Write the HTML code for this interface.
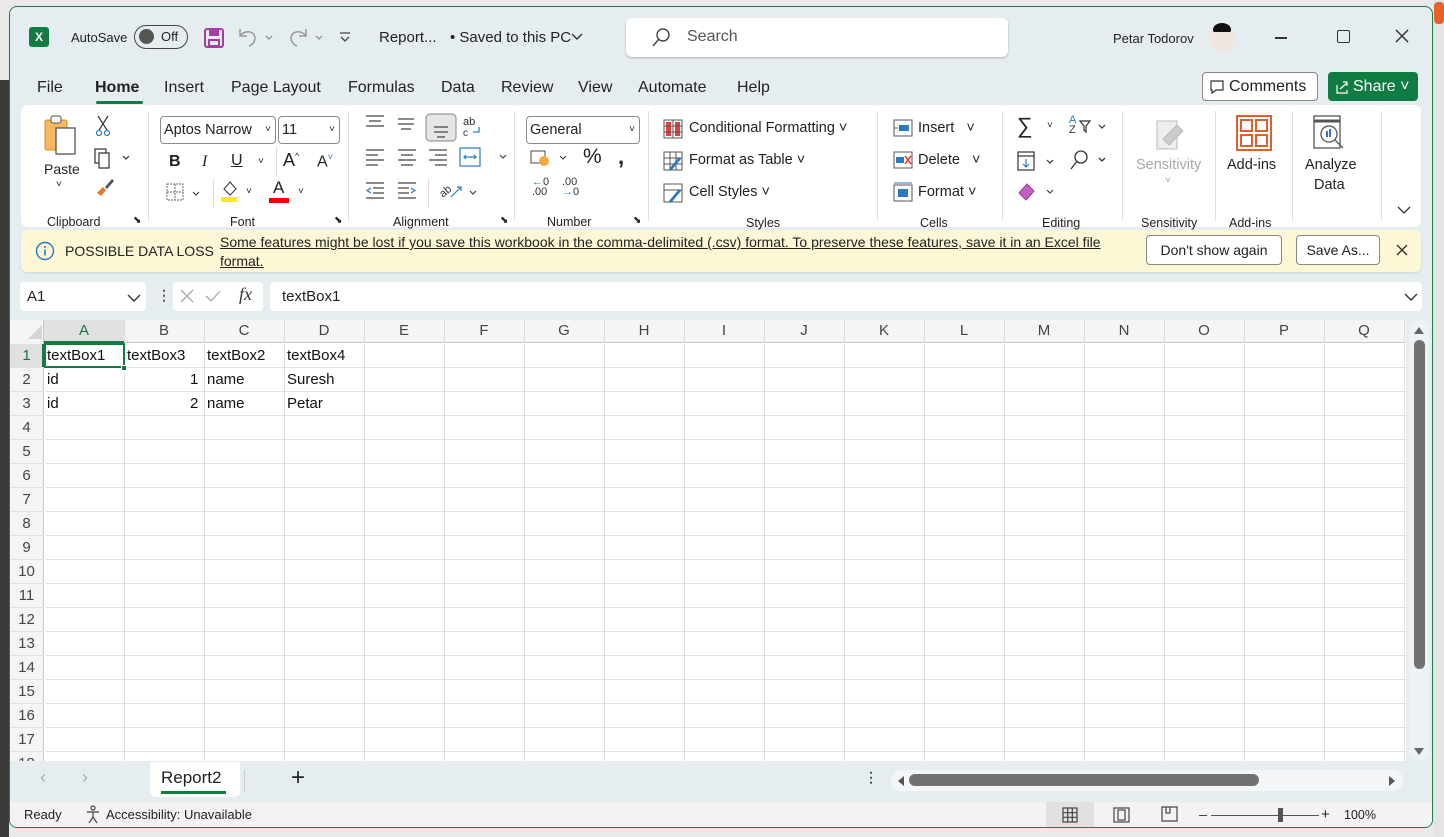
<!DOCTYPE html>
<html><head><meta charset="utf-8"><style>
*{box-sizing:border-box;margin:0;padding:0}
body{width:1444px;height:837px;overflow:hidden;background:#e9e9e9;font-family:"Liberation Sans",sans-serif;font-size:14px;color:#222;position:relative}
.a{position:absolute}
.win{position:absolute;left:9px;top:6px;width:1424px;height:822px;background:#e6edf0;border:1px solid #1f7a45;border-radius:8px;overflow:hidden}
.t{position:absolute;white-space:nowrap}
.ribbon{position:absolute;left:11px;top:98px;width:1400px;height:122px;background:#fff;border-radius:7px}
.rin{position:absolute;left:-10px;top:0;width:1410px;height:122px}
.sep{position:absolute;top:6px;width:1px;height:110px;background:#e0e0e0}
.dd{position:absolute;border:1px solid #8a8a8a;border-radius:4px;background:#fff;height:28px}
.btn{position:absolute;border:1px solid #888;border-radius:4px;background:#fff;height:30px;font-size:14px;text-align:center;line-height:28px}
.ch{position:absolute;top:0;height:22px;text-align:center;line-height:22px;font-size:15px;color:#444}
.rh{position:absolute;left:0;width:33px;height:24px;text-align:center;line-height:24px;font-size:15px;color:#444}
.cell{position:absolute;height:24px;line-height:24px;font-size:15px;color:#111}
</style></head><body>
<div class="a" style="left:0;top:80px;width:9px;height:757px;background:#3b3b3b"></div>
<div class="a" style="left:1433px;top:0;width:11px;height:837px;background:#e4e4e4"></div>
<div class="a" style="left:1434px;top:2px;width:10px;height:22px;background:#e8612c;border-radius:4px"></div>
<div class="win">
 <div class="a" style="left:19px;top:20px;width:20px;height:20px;background:#107c41;border-radius:3px;color:#fff;font-weight:bold;font-size:12px;text-align:center;line-height:20px">X</div>
 <div class="t" style="left:61px;top:23px;font-size:13px">AutoSave</div>
 <div class="a" style="left:124px;top:18px;width:54px;height:24px;border:1.5px solid #444;border-radius:12px"><div class="a" style="left:4px;top:3px;width:15px;height:15px;border-radius:50%;background:#555"></div><span class="t" style="left:26px;top:3px;font-size:13px">Off</span></div>
 <svg class="a" style="left:193px;top:20px" width="22" height="22"><rect x="2" y="2" width="18" height="18" rx="2" fill="none" stroke="#a33ea3" stroke-width="2"/><rect x="6" y="3" width="10" height="6" fill="#a33ea3"/><rect x="6" y="13" width="10" height="6" fill="none" stroke="#a33ea3" stroke-width="2"/></svg>
 <svg class="a" style="left:226px;top:18px" width="40" height="24" fill="none" stroke="#999" stroke-width="1.5"><path d="M4 4v7h7M4 11c4-6 14-6 15 2 0 4-3 7-6 8"/><path d="M30 11l3 3 3-3"/></svg>
 <svg class="a" style="left:276px;top:18px" width="40" height="24" fill="none" stroke="#999" stroke-width="1.5"><path d="M20 4v7h-7M20 11c-4-6-14-6-15 2 0 4 3 7 6 8"/><path d="M30 11l3 3 3-3"/></svg>
 <svg class="a" style="left:328px;top:24px" width="14" height="14" fill="none" stroke="#444" stroke-width="1.3"><path d="M2 2h10M3 6l4 4 4-4"/></svg>
 <div class="t" style="left:369px;top:22px;font-size:15px">Report...</div>
 <div class="t" style="left:440px;top:22px;font-size:15px">• Saved to this PC</div>
 <svg class="a" style="left:560px;top:25px" width="14" height="10" fill="none" stroke="#333" stroke-width="1.4"><path d="M2 2l5 5 5-5"/></svg>
 <div class="a" style="left:616px;top:11px;width:382px;height:39px;background:#fff;border-radius:6px;box-shadow:0 1px 2px rgba(0,0,0,.25)"></div>
 <svg class="a" style="left:640px;top:20px" width="22" height="22" fill="none" stroke="#444" stroke-width="1.4"><circle cx="13" cy="8" r="6"/><path d="M9 12L3 19"/></svg>
 <div class="t" style="left:677px;top:21px;font-size:16px;color:#555">Search</div>
 <div class="t" style="left:1103px;top:24px;font-size:13px">Petar Todorov</div>
 <div class="a" style="left:1199px;top:16px;width:26px;height:30px;border-radius:50%;background:#f0e6e0;overflow:hidden"><div class="a" style="left:4px;top:0;width:18px;height:9px;background:#111;border-radius:8px 8px 2px 2px"></div></div>
 <div class="a" style="left:1265px;top:30px;width:12px;height:1.5px;background:#333"></div>
 <div class="a" style="left:1327px;top:23px;width:13px;height:13px;border:1.5px solid #333;border-radius:2px"></div>
 <svg class="a" style="left:1385px;top:22px" width="14" height="14" stroke="#333" stroke-width="1.5"><path d="M1 1l12 12M13 1L1 13"/></svg>
 <div class="t" style="left:27px;top:72px;font-size:16px">File</div>
 <div class="t" style="left:85px;top:72px;font-size:16px;font-weight:bold;color:#222">Home</div>
 <div class="a" style="left:86px;top:94px;width:47px;height:3px;background:#107c41;border-radius:2px"></div>
 <div class="t" style="left:154px;top:72px;font-size:16px">Insert</div>
 <div class="t" style="left:221px;top:72px;font-size:16px">Page Layout</div>
 <div class="t" style="left:338px;top:72px;font-size:16px">Formulas</div>
 <div class="t" style="left:431px;top:72px;font-size:16px">Data</div>
 <div class="t" style="left:491px;top:72px;font-size:16px">Review</div>
 <div class="t" style="left:568px;top:72px;font-size:16px">View</div>
 <div class="t" style="left:628px;top:72px;font-size:16px">Automate</div>
 <div class="t" style="left:727px;top:72px;font-size:16px">Help</div>
 <div class="a" style="left:1192px;top:65px;width:116px;height:29px;background:#fff;border:1px solid #888;border-radius:4px;font-size:16px;line-height:27px;padding-left:26px">Comments</div>
 <svg class="a" style="left:1199px;top:72px" width="16" height="16" fill="none" stroke="#333" stroke-width="1.2"><path d="M2 2h12v9H7l-4 3v-3H2z"/></svg>
 <div class="a" style="left:1318px;top:65px;width:90px;height:29px;background:#107c41;border-radius:4px;color:#fff;font-size:16px;line-height:29px;padding-left:25px">Share ˅</div>
 <svg class="a" style="left:1324px;top:72px" width="16" height="16" fill="none" stroke="#fff" stroke-width="1.2"><path d="M3 6v8h10v-3M6 10l7-6M9 3h4v4"/></svg>
 <div class="ribbon"><div class="rin">
  <svg class="a" style="left:33px;top:9px" width="34" height="42"><rect x="1" y="6" width="22" height="30" rx="2" fill="#f4b860" stroke="#d88d20"/><rect x="7" y="2" width="10" height="7" rx="2" fill="#fff" stroke="#555"/><rect x="12" y="14" width="19" height="26" fill="#fff" stroke="#555" stroke-width="1.3"/></svg>
  <div class="t" style="left:33px;top:56px;font-size:14px">Paste</div>
  <div class="t" style="left:45px;top:74px;font-size:10px">˅</div>
  <svg class="a" style="left:84px;top:10px" width="16" height="22" fill="none" stroke="#333" stroke-width="1.2"><path d="M3 1l9 14M13 1L4 15"/><circle cx="4" cy="18" r="2.5" stroke="#2b79c2"/><circle cx="12" cy="18" r="2.5" stroke="#2b79c2"/></svg>
  <svg class="a" style="left:82px;top:42px" width="40" height="22" fill="none" stroke="#333" stroke-width="1.2"><rect x="2" y="2" width="11" height="14"/><path d="M6 6h10v15H6z" fill="#fff"/><path d="M30 9l3 3 3-3"/></svg>
  <svg class="a" style="left:84px;top:72px" width="20" height="20"><path d="M2 16l6-6 3 3-5 6z" fill="#e8762b"/><path d="M10 10l7-8 2 2-7 8z" fill="#555"/></svg>
  <div class="t" style="left:36px;top:110px;font-size:12.5px">Clipboard</div>
  <div class="t" style="left:122px;top:110px;font-size:10px">⬊</div>
  <div class="sep" style="left:137px"></div>
  <div class="dd" style="left:149px;top:11px;width:116px;font-size:14.5px;line-height:26px;padding-left:3px">Aptos Narrow<span style="position:absolute;right:4px;font-size:10px">˅</span></div>
  <div class="dd" style="left:267px;top:11px;width:62px;font-size:14.5px;line-height:26px;padding-left:3px">11<span style="position:absolute;right:4px;font-size:10px">˅</span></div>
  <div class="t" style="left:158px;top:48px;font-size:16px;font-weight:bold">B</div>
  <div class="t" style="left:191px;top:48px;font-size:16px;font-style:italic;font-family:'Liberation Serif',serif">I</div>
  <div class="t" style="left:220px;top:47px;font-size:16px;text-decoration:underline">U</div>
  <div class="t" style="left:247px;top:51px;font-size:10px">˅</div>
  <div class="a" style="left:265px;top:42px;width:1px;height:28px;background:#ddd"></div>
  <div class="t" style="left:272px;top:45px;font-size:18px">A<sup style="font-size:9px">^</sup></div>
  <div class="t" style="left:306px;top:47px;font-size:16px">A<sup style="font-size:9px;color:#2b79c2">˅</sup></div>
  <svg class="a" style="left:155px;top:78px" width="38" height="20" fill="none" stroke="#666" stroke-width="1" stroke-dasharray="2 1"><rect x="1" y="1" width="16" height="16"/><path d="M9 1v16M1 9h16"/><path d="M27 9l3 3 3-3" stroke="#333" stroke-dasharray="0"/></svg>
  <div class="a" style="left:202px;top:74px;width:1px;height:28px;background:#ddd"></div>
  <svg class="a" style="left:208px;top:74px" width="20" height="24"><path d="M5 10l6-7 6 7-6 6z" fill="none" stroke="#333"/><rect x="2" y="18" width="16" height="5" fill="#ffee00"/></svg>
  <div class="t" style="left:235px;top:81px;font-size:10px">˅</div>
  <div class="t" style="left:262px;top:73px;font-size:17px">A</div>
  <div class="a" style="left:258px;top:93px;width:20px;height:5px;background:#e00"></div>
  <div class="t" style="left:287px;top:81px;font-size:10px">˅</div>
  <div class="t" style="left:219px;top:110px;font-size:12.5px">Font</div>
  <div class="t" style="left:323px;top:110px;font-size:10px">⬊</div>
  <div class="sep" style="left:337px"></div>
  <svg class="a" style="left:352px;top:8px" width="150" height="100" fill="none" stroke="#444" stroke-width="1.2">
   <path d="M3 3h18M6 8h12M3 13h18"/><path d="M35 6h16M35 11h16M38 16h10"/>
   <rect x="63" y="1" width="30" height="27" rx="4" fill="#e5e5e5" stroke="#999"/><path d="M71 14h14M71 19h14M74 24h8"/>
   <text x="100" y="12" font-size="11" fill="#333" stroke="none" font-family="Liberation Sans">ab</text><text x="100" y="23" font-size="10" fill="#333" stroke="none">c</text><path d="M116 14v5h-6" stroke="#2b79c2"/>
   <path d="M3 37h18M3 42h12M3 47h18M3 52h12"/><path d="M35 37h18M38 42h12M35 47h18M38 52h12"/><path d="M66 37h18M72 42h12M66 47h18M72 52h12"/>
   <rect x="97" y="35" width="20" height="18" stroke="#2b79c2"/><path d="M101 44h12M103 42l-2 2 2 2M111 42l2 2-2 2" stroke="#2b79c2"/><path d="M137 42l3 3 3-3"/>
   <path d="M3 70h18M10 75h11M10 80h11M3 85h18"/><path d="M8 75l-4 2.5 4 2.5" stroke="#2b79c2"/>
   <path d="M35 70h18M35 75h11M35 80h11M35 85h18"/><path d="M48 75l4 2.5-4 2.5" stroke="#2b79c2"/>
   <text x="76" y="82" font-size="11" fill="#333" stroke="none" transform="rotate(-40 82 78)">ab</text><path d="M88 84l10-10M94 74h4v4" stroke="#2b79c2"/><path d="M107 78l3 3 3-3"/>
  </svg>
  <div class="a" style="left:417px;top:74px;width:1px;height:28px;background:#ddd"></div>
  <div class="t" style="left:382px;top:110px;font-size:12.5px">Alignment</div>
  <div class="t" style="left:489px;top:110px;font-size:10px">⬊</div>
  <div class="sep" style="left:503px"></div>
  <div class="dd" style="left:515px;top:11px;width:114px;font-size:14.5px;line-height:26px;padding-left:3px">General<span style="position:absolute;right:4px;font-size:10px">˅</span></div>
  <svg class="a" style="left:518px;top:42px" width="40" height="22"><rect x="2" y="4" width="14" height="12" fill="none" stroke="#444"/><ellipse cx="15" cy="14" rx="5" ry="5" fill="#f2a940"/><path d="M31 9l3 3 3-3" fill="none" stroke="#333"/></svg>
  <div class="t" style="left:572px;top:40px;font-size:21px">%</div>
  <div class="t" style="left:607px;top:39px;font-size:22px;font-weight:bold">,</div>
  <div class="t" style="left:521px;top:72px;font-size:11px;line-height:10px;color:#2b79c2">←<span style="color:#333">0</span><br><span style="color:#333">.00</span></div>
  <div class="t" style="left:551px;top:72px;font-size:11px;line-height:10px;color:#333">.00<br><span style="color:#2b79c2">→</span>0</div>
  <div class="t" style="left:536px;top:110px;font-size:12.5px">Number</div>
  <div class="t" style="left:622px;top:110px;font-size:10px">⬊</div>
  <div class="sep" style="left:637px"></div>
  <svg class="a" style="left:652px;top:14px" width="20" height="20"><rect x="1" y="1" width="18" height="18" fill="#fff" stroke="#555"/><rect x="3" y="3" width="5" height="14" fill="#e04040"/><rect x="12" y="3" width="5" height="14" fill="#e04040"/><path d="M1 7h18M1 13h18M10 1v18" stroke="#555"/></svg>
  <div class="t" style="left:678px;top:15px;font-size:14.5px">Conditional Formatting ˅</div>
  <svg class="a" style="left:652px;top:46px" width="20" height="20"><rect x="1" y="1" width="18" height="18" fill="#fff" stroke="#555"/><path d="M1 7h18M1 13h18M7 1v18M13 1v18" stroke="#555"/><path d="M6 18l10-12 2 2-10 12z" fill="#2b79c2"/></svg>
  <div class="t" style="left:678px;top:47px;font-size:14.5px">Format as Table ˅</div>
  <svg class="a" style="left:652px;top:78px" width="20" height="20"><rect x="1" y="1" width="18" height="18" fill="#fff" stroke="#555"/><path d="M1 7h18" stroke="#555"/><path d="M6 18l10-12 2 2-10 12z" fill="#2b79c2"/></svg>
  <div class="t" style="left:678px;top:79px;font-size:14.5px">Cell Styles ˅</div>
  <div class="t" style="left:735px;top:111px;font-size:12.5px">Styles</div>
  <div class="sep" style="left:866px"></div>
  <svg class="a" style="left:882px;top:13px" width="20" height="20"><rect x="1" y="2" width="18" height="16" fill="#fff" stroke="#555"/><rect x="6" y="7" width="10" height="6" fill="#2b79c2"/><path d="M5 10H1" stroke="#2b79c2"/></svg>
  <div class="t" style="left:907px;top:15px;font-size:14.5px">Insert &nbsp;&nbsp;˅</div>
  <svg class="a" style="left:882px;top:45px" width="20" height="20"><rect x="1" y="2" width="18" height="16" fill="#fff" stroke="#555"/><rect x="3" y="7" width="8" height="6" fill="#2b79c2"/><path d="M12 6l6 8M18 6l-6 8" stroke="#e33" stroke-width="1.5"/></svg>
  <div class="t" style="left:907px;top:47px;font-size:14.5px">Delete &nbsp;&nbsp;˅</div>
  <svg class="a" style="left:882px;top:77px" width="20" height="20"><rect x="1" y="3" width="18" height="16" fill="#fff" stroke="#555"/><rect x="5" y="7" width="10" height="8" fill="#2b79c2"/><path d="M1 1h18" stroke="#2b79c2"/></svg>
  <div class="t" style="left:907px;top:79px;font-size:14.5px">Format ˅</div>
  <div class="t" style="left:909px;top:111px;font-size:12.5px">Cells</div>
  <div class="sep" style="left:991px"></div>
  <div class="t" style="left:1006px;top:8px;font-size:22px">∑</div>
  <div class="t" style="left:1036px;top:15px;font-size:10px">˅</div>
  <div class="t" style="left:1058px;top:10px;font-size:11px;line-height:10px;color:#2b79c2">A<br><span style="color:#333">Z</span></div>
  <svg class="a" style="left:1068px;top:14px" width="30" height="16" fill="none" stroke="#333" stroke-width="1.2"><path d="M1 2h10l-4 5v6l-2-2V7z"/><path d="M20 6l3 3 3-3"/></svg>
  <svg class="a" style="left:1006px;top:46px" width="40" height="22" fill="none" stroke="#333" stroke-width="1.2"><rect x="1" y="1" width="16" height="18"/><path d="M1 5h16"/><path d="M9 8v8M6 13l3 3 3-3" stroke="#2b79c2"/><path d="M30 9l3 3 3-3"/></svg>
  <svg class="a" style="left:1058px;top:44px" width="40" height="24" fill="none" stroke="#333" stroke-width="1.3"><circle cx="12" cy="8" r="6"/><path d="M8 12l-6 8"/><path d="M30 9l3 3 3-3"/></svg>
  <svg class="a" style="left:1006px;top:76px" width="40" height="22"><path d="M2 12l8-9 7 7-8 9z" fill="#c060c0" stroke="#9a3aa0"/><path d="M30 9l3 3 3-3" fill="none" stroke="#333"/></svg>
  <div class="t" style="left:1031px;top:111px;font-size:12.5px">Editing</div>
  <div class="sep" style="left:1111px"></div>
  <svg class="a" style="left:1144px;top:10px" width="34" height="38"><path d="M2 6h20v28H2z" fill="#eee" stroke="#bbb"/><path d="M8 24l14-14 6 6-14 14z" fill="#ccc" stroke="#bbb"/></svg>
  <div class="t" style="left:1125px;top:52px;font-size:14.5px;color:#aaa">Sensitivity</div>
  <div class="t" style="left:1154px;top:70px;font-size:10px;color:#aaa">˅</div>
  <div class="t" style="left:1130px;top:111px;font-size:12.5px">Sensitivity</div>
  <div class="sep" style="left:1204px"></div>
  <svg class="a" style="left:1225px;top:10px" width="36" height="36" fill="none" stroke="#e0602c" stroke-width="2"><rect x="1" y="1" width="34" height="34"/><rect x="5" y="5" width="11" height="11"/><rect x="20" y="5" width="11" height="11"/><rect x="5" y="20" width="11" height="11"/><rect x="20" y="20" width="11" height="11"/></svg>
  <div class="t" style="left:1216px;top:52px;font-size:14.5px">Add-ins</div>
  <div class="t" style="left:1218px;top:111px;font-size:12.5px">Add-ins</div>
  <div class="sep" style="left:1281px"></div>
  <svg class="a" style="left:1302px;top:10px" width="38" height="38" fill="none" stroke="#555" stroke-width="1.3"><rect x="1" y="1" width="26" height="32"/><path d="M1 6h26" stroke-width="3"/><circle cx="16" cy="19" r="8"/><path d="M22 25l8 8"/><rect x="13" y="16" width="2" height="6" fill="#2b79c2" stroke="none"/><rect x="16" y="14" width="2" height="8" fill="#2b79c2" stroke="none"/></svg>
  <div class="t" style="left:1294px;top:52px;font-size:14.5px">Analyze</div>
  <div class="t" style="left:1303px;top:72px;font-size:14.5px">Data</div>
  <div class="sep" style="left:1370px"></div>
  <svg class="a" style="left:1386px;top:100px" width="14" height="10" fill="none" stroke="#333" stroke-width="1.3"><path d="M1 2l6 6 6-6"/></svg>
 </div></div>
 <div class="a" style="left:11px;top:223px;width:1400px;height:42px;background:#fcf7d4;border-radius:6px;box-shadow:0 1px 2px rgba(0,0,0,.1)"></div>
 <svg class="a" style="left:25px;top:234px" width="20" height="20"><circle cx="10" cy="10" r="8.5" fill="none" stroke="#2b79c2" stroke-width="1.4"/><rect x="9.2" y="8.5" width="1.6" height="6" fill="#2b79c2"/><circle cx="10" cy="6" r="1" fill="#2b79c2"/></svg>
 <div class="t" style="left:55px;top:236px;font-size:14px">POSSIBLE DATA LOSS</div>
 <div class="t" style="left:210px;top:226px;font-size:14px;line-height:19px;text-decoration:underline;white-space:normal;width:925px">Some features might be lost if you save this workbook in the comma-delimited (.csv) format. To preserve these features, save it in an Excel file format.</div>
 <div class="btn" style="left:1136px;top:228px;width:136px">Don't show again</div>
 <div class="btn" style="left:1286px;top:228px;width:84px">Save As...</div>
 <svg class="a" style="left:1386px;top:237px" width="12" height="12" stroke="#333" stroke-width="1.4"><path d="M1 1l10 10M11 1L1 11"/></svg>
 <div class="a" style="left:10px;top:275px;width:126px;height:29px;background:#fff;border-radius:4px"></div>
 <div class="t" style="left:17px;top:281px;font-size:15px">A1</div>
 <svg class="a" style="left:117px;top:286px" width="14" height="10" fill="none" stroke="#333" stroke-width="1.4"><path d="M1 2l6 6 6-6"/></svg>
 <div class="t" style="left:147px;top:280px;font-size:14px;font-weight:bold;color:#555">⋮</div>
 <div class="a" style="left:163px;top:275px;width:90px;height:29px;background:#fff;border-radius:4px"></div>
 <svg class="a" style="left:168px;top:281px" width="50" height="16" fill="none" stroke="#aaa" stroke-width="1.3"><path d="M3 2l12 12M15 2L3 14M28 8l5 5 9-10"/></svg>
 <div class="t" style="left:229px;top:277px;font-size:18px;font-style:italic;font-family:'Liberation Serif',serif;color:#333">fx</div>
 <div class="a" style="left:260px;top:275px;width:1152px;height:29px;background:#fff;border-radius:4px"></div>
 <div class="t" style="left:272px;top:281px;font-size:15px">textBox1</div>
 <svg class="a" style="left:1394px;top:285px" width="14" height="10" fill="none" stroke="#333" stroke-width="1.4"><path d="M1 2l6 6 6-6"/></svg>
 <div class="a" style="left:0;top:313px;width:1396px;height:441px;background:#fff;overflow:hidden">
  <div class="a" style="left:0;top:0;width:1396px;height:23px;background:#f5f5f5;border-bottom:1px solid #c8c8c8"></div>
  <div class="a" style="left:0;top:0;width:34px;height:441px;background:#f5f5f5;border-right:1px solid #c8c8c8"></div>
  <svg class="a" style="left:18px;top:5px" width="14" height="14"><path d="M14 0v14H0z" fill="#d5d5d5"/></svg>
  <div class="a" style="left:34px;top:0;width:80px;height:23px;background:#e1e1e1;border-bottom:2px solid #107c41"></div>
  <div class="a" style="left:0;top:24px;width:34px;height:24px;background:#e1e1e1;border-right:2px solid #107c41"></div>
  <div class="a" style="left:35px;top:24px;width:1361px;height:417px;background-image:linear-gradient(to right,#e1e1e1 1px,transparent 1px),linear-gradient(to bottom,transparent 23px,#e1e1e1 23px);background-size:80px 24px;background-position:79px 0,0 0"></div>
  <div class="a" style="left:0;top:24px;width:34px;height:417px;background-image:linear-gradient(to bottom,transparent 23px,#e1e1e1 23px);background-size:34px 24px"></div>
  <div class="a" style="left:35px;top:0;width:1361px;height:23px;background-image:linear-gradient(to right,#dcdcdc 1px,transparent 1px);background-size:80px 23px;background-position:79px 0"></div>
  <div class="ch" style="left:34px;width:80px;color:#107c41">A</div><div class="ch" style="left:114px;width:80px">B</div><div class="ch" style="left:194px;width:80px">C</div><div class="ch" style="left:274px;width:80px">D</div><div class="ch" style="left:354px;width:80px">E</div><div class="ch" style="left:434px;width:80px">F</div><div class="ch" style="left:514px;width:80px">G</div><div class="ch" style="left:594px;width:80px">H</div><div class="ch" style="left:674px;width:80px">I</div><div class="ch" style="left:754px;width:80px">J</div><div class="ch" style="left:834px;width:80px">K</div><div class="ch" style="left:914px;width:80px">L</div><div class="ch" style="left:994px;width:80px">M</div><div class="ch" style="left:1074px;width:80px">N</div><div class="ch" style="left:1154px;width:80px">O</div><div class="ch" style="left:1234px;width:80px">P</div><div class="ch" style="left:1314px;width:80px">Q</div>
  <div class="rh" style="top:24px;color:#107c41">1</div><div class="rh" style="top:48px">2</div><div class="rh" style="top:72px">3</div><div class="rh" style="top:96px">4</div><div class="rh" style="top:120px">5</div><div class="rh" style="top:144px">6</div><div class="rh" style="top:168px">7</div><div class="rh" style="top:192px">8</div><div class="rh" style="top:216px">9</div><div class="rh" style="top:240px">10</div><div class="rh" style="top:264px">11</div><div class="rh" style="top:288px">12</div><div class="rh" style="top:312px">13</div><div class="rh" style="top:336px">14</div><div class="rh" style="top:360px">15</div><div class="rh" style="top:384px">16</div><div class="rh" style="top:408px">17</div><div class="rh" style="top:432px">18</div>
  <div class="a" style="left:34px;top:23px;width:81px;height:25px;border:2px solid #107c41"></div>
  <div class="a" style="left:111px;top:45px;width:6px;height:6px;background:#107c41;border:1px solid #fff"></div>
  <div class="cell" style="left:37px;top:24px">textBox1</div><div class="cell" style="left:117px;top:24px">textBox3</div><div class="cell" style="left:197px;top:24px">textBox2</div><div class="cell" style="left:277px;top:24px">textBox4</div>
  <div class="cell" style="left:37px;top:48px">id</div><div class="cell" style="left:180px;top:48px">1</div><div class="cell" style="left:197px;top:48px">name</div><div class="cell" style="left:277px;top:48px">Suresh</div>
  <div class="cell" style="left:37px;top:72px">id</div><div class="cell" style="left:180px;top:72px">2</div><div class="cell" style="left:197px;top:72px">name</div><div class="cell" style="left:277px;top:72px">Petar</div>
 </div>
 <div class="a" style="left:1399px;top:313px;width:20px;height:440px;background:#eef2f4;border-radius:8px"></div>
 <svg class="a" style="left:1403px;top:318px" width="12" height="10"><path d="M1 9l5-7 5 7z" fill="#666"/></svg>
 <div class="a" style="left:1404px;top:333px;width:11px;height:329px;background:#717171;border-radius:6px"></div>
 <svg class="a" style="left:1403px;top:740px" width="12" height="10"><path d="M1 1l5 7 5-7z" fill="#666"/></svg>
 <div class="t" style="left:30px;top:760px;font-size:18px;color:#aaa">‹</div>
 <div class="t" style="left:72px;top:760px;font-size:18px;color:#aaa">›</div>
 <div class="a" style="left:140px;top:755px;width:90px;height:35px;background:#fff;border-radius:0 0 6px 6px"></div>
 <div class="t" style="left:151px;top:761px;font-size:17px">Report2</div>
 <div class="a" style="left:151px;top:784px;width:65px;height:2.5px;background:#107c41"></div>
 <div class="a" style="left:234px;top:763px;width:1px;height:22px;background:#ccc"></div>
 <div class="t" style="left:281px;top:757px;font-size:24px;font-weight:300">+</div>
 <div class="t" style="left:854px;top:762px;font-size:14px;font-weight:bold;color:#555">⋮</div>
 <div class="a" style="left:881px;top:763px;width:512px;height:21px;background:#f3f5f6;border-radius:10px"></div>
 <svg class="a" style="left:887px;top:768px" width="8" height="12"><path d="M7 1L1 6l6 5z" fill="#555"/></svg>
 <div class="a" style="left:899px;top:767px;width:350px;height:12px;background:#717171;border-radius:6px"></div>
 <svg class="a" style="left:1378px;top:768px" width="8" height="12"><path d="M1 1l6 5-6 5z" fill="#555"/></svg>
 <div class="a" style="left:0;top:795px;width:1424px;height:27px;background:#f3f3f3"></div>
 <div class="t" style="left:14px;top:800px;font-size:13px">Ready</div>
 <svg class="a" style="left:75px;top:798px" width="18" height="20" fill="none" stroke="#444" stroke-width="1.2"><circle cx="8" cy="3" r="2"/><path d="M2 7h12M8 7v5l-4 6M8 12l4 6"/></svg>
 <div class="t" style="left:96px;top:800px;font-size:13px">Accessibility: Unavailable</div>
 <div class="a" style="left:1036px;top:795px;width:48px;height:27px;background:#e1e1e1"></div>
 <svg class="a" style="left:1052px;top:800px" width="16" height="16" fill="none" stroke="#444" stroke-width="1.2"><rect x="1" y="1" width="14" height="14"/><path d="M1 5.7h14M1 10.3h14M5.7 1v14M10.3 1v14"/></svg>
 <svg class="a" style="left:1103px;top:800px" width="18" height="16" fill="none" stroke="#444" stroke-width="1.2"><rect x="1" y="1" width="15" height="14"/><rect x="5" y="3" width="7" height="10"/></svg>
 <svg class="a" style="left:1151px;top:799px" width="18" height="16" fill="none" stroke="#444" stroke-width="1.2"><path d="M1 1h15v14H1zM5 1v6h4V1"/></svg>
 <div class="a" style="left:1189px;top:808px;width:8px;height:1.3px;background:#444"></div>
 <div class="a" style="left:1201px;top:808px;width:108px;height:1px;background:#555"></div>
 <div class="a" style="left:1268px;top:801px;width:5px;height:14px;background:#555"></div>
 <div class="t" style="left:1311px;top:799px;font-size:15px">+</div>
 <div class="t" style="left:1334px;top:801px;font-size:12.5px">100%</div>
</div>
</body></html>
